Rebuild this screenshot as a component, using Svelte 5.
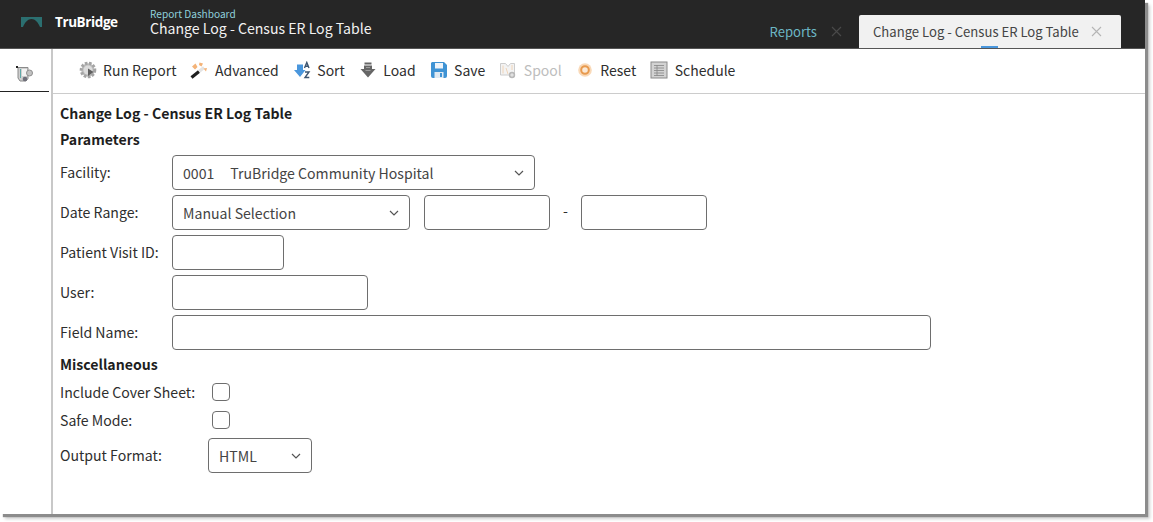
<script>
  const rows = [
    { label: 'Patient Visit ID:', cls: 'w-id' },
    { label: 'User:', cls: 'w-user' },
    { label: 'Field Name:', cls: 'w-field' }
  ];
</script>

{#snippet chev()}
  <svg class="chev" viewBox="0 0 10 6" width="10" height="6"><path d="M1 1l4 4 4-4" fill="none" stroke="#555" stroke-width="1.2"/></svg>
{/snippet}

<div class="page">
<div class="frame">
  <header class="top">
    <div class="brand">
      <svg class="logo" width="21" height="10" viewBox="0 0 21 10"><path d="M0 0H21V10H19C17 5 14 2 10.500 2S4 5 2 10H0Z" fill="#2b6f70"/></svg>
      <span class="brandname">TruBridge</span>
    </div>
    <div class="crumb">
      <div class="crumb-sub">Report Dashboard</div>
      <div class="crumb-title">Change Log - Census ER Log Table</div>
    </div>
    <div class="tabs">
      <div class="tab">
        <span>Reports</span>
        <svg width="11" height="11" viewBox="0 0 11 11"><path d="M1 1l9 9M10 1l-9 9" stroke="#4a4a4a" stroke-width="1.100"/></svg>
      </div>
      <div class="tab active">
        <span>Change Log - Census ER Log Table</span>
        <svg width="11" height="11" viewBox="0 0 11 11"><path d="M1 1l9 9M10 1l-9 9" stroke="#b5b5b5" stroke-width="1.100"/></svg>
        <i class="tab-mark"></i>
      </div>
    </div>
  </header>

  <div class="body">
    <aside class="side">
      <div class="side-item">
        <svg width="18" height="18" viewBox="0 0 18 18">
          <path d="M2 2.500h10v11l-2 2.500H4l-2-3Z" fill="#cfcfcf" stroke="#8a8a8a"/>
          <path d="M4.500 4v9" stroke="#5fa9a8"/>
          <rect x="6" y="4" width="5" height="7" fill="#f2f2f2"/>
          <circle cx="13.500" cy="8" r="3" fill="#c2c2c2" stroke="#8f8f8f"/>
          <circle cx="9" cy="14" r="2.300" fill="#6f6f7a"/>
          <rect x="0" y="1" width="2" height="2" fill="#222"/>
        </svg>
      </div>
    </aside>

    <main class="main">
      <nav class="toolbar">
        <button class="tool">
          <svg width="18" height="18" viewBox="0 0 18 18">
            <circle cx="9" cy="9" r="6.800" fill="#bdbdbd" stroke="#a4a4a4" stroke-width="3" stroke-dasharray="2.600 1.500"/>
            <circle cx="9" cy="9" r="4.500" fill="#dcdcdc"/>
            <path d="M9 7.500l5.500 3.500L9 15Z" fill="#5f5f5f"/>
          </svg>
          Run Report
        </button>
        <button class="tool">
          <svg width="18" height="18" viewBox="0 0 18 18">
            <path d="M1.500 16.500L9 10.500" stroke="#1e1e1e" stroke-width="3.200"/>
            <path d="M9 10.500l5-4" stroke="#e4e4e4" stroke-width="3.200"/>
            <path d="M2 5.500l3.500-3 2 3.500-2.500 2.500ZM9.500 1.500l3.500 1-1.500 3-2.500-1.500ZM13.500 7.500l3.500-.5-1 3.500Z" fill="#f4b378"/>
          </svg>
          Advanced
        </button>
        <button class="tool">
          <svg width="18" height="18" viewBox="0 0 18 18">
            <path d="M4 3.500h6v5.500h2.500L7 16 1 9h3Z" fill="#4a97dd"/>
            <path d="M11.500 7l2.300-5.500L16 7M12.500 5.300h2.600M12 11h4l-4 5.500h4.300" fill="none" stroke="#3d5570" stroke-width="1.400"/>
          </svg>
          Sort
        </button>
        <button class="tool">
          <svg width="18" height="18" viewBox="0 0 18 18">
            <path d="M5.500 1.500h7v2h-7ZM5 4.500h8v3.500h3.500L9 16.500 1.500 8H5Z" fill="#666"/>
            <path d="M7 6.500h4M6.500 9.500h5" stroke="#9c9c9c"/>
          </svg>
          Load
        </button>
        <button class="tool">
          <svg width="18" height="18" viewBox="0 0 18 18">
            <path d="M2 1h12l3 3v11a2 2 0 0 1-2 2H3a2 2 0 0 1-2-2V2Z" fill="#3f93d4"/>
            <rect x="5" y="2" width="8" height="5.500" fill="#eef4fa"/>
            <rect x="4.500" y="11" width="9" height="6" fill="#dfe9f2"/>
            <rect x="10" y="12" width="2" height="4" fill="#3f93d4"/>
          </svg>
          Save
        </button>
        <button class="tool off">
          <svg width="18" height="18" viewBox="0 0 18 18">
            <path d="M1.500 2.500h5l2.500 3 2.500-3h4v11.500h-14Z" fill="#f3f3f3" stroke="#cccccc"/>
            <path d="M4 4.500v8M7 7l2 6M13 4v5" stroke="#f0d4b8"/>
            <circle cx="13" cy="14" r="3.200" fill="#b8b8b8"/>
            <path d="M13 12.200v3.600M11.200 14h3.600" stroke="#eee"/>
          </svg>
          Spool
        </button>
        <button class="tool">
          <svg width="18" height="18" viewBox="0 0 18 18">
            <circle cx="9" cy="9" r="6.800" fill="#f9d9b8"/>
            <circle cx="9" cy="9" r="3.800" fill="#fbe9d6" stroke="#e89a4e" stroke-width="2"/>
          </svg>
          Reset
        </button>
        <button class="tool">
          <svg width="18" height="18" viewBox="0 0 18 18">
            <rect x="1" y="1" width="16" height="16" fill="#d2d2d2" stroke="#8a8a8a"/>
            <path d="M4 4.500h10M4 7h10M4 9.500h10M4 12h10M4 14.500h10M7 4v11" stroke="#8c8c8c" stroke-width="0.900"/>
          </svg>
          Schedule
        </button>
      </nav>

      <section class="form">
        <h1>Change Log - Census ER Log Table</h1>
        <h2>Parameters</h2>

        <div class="row">
          <span class="lbl">Facility:</span>
          <div class="ctl sel w-fac"><span class="pre">0001</span><span>TruBridge Community Hospital</span>{@render chev()}</div>
        </div>
        <div class="row">
          <span class="lbl">Date Range:</span>
          <div class="ctl sel w-range"><span>Manual Selection</span>{@render chev()}</div>
          <div class="ctl w-date"></div>
          <span class="dash">-</span>
          <div class="ctl w-date"></div>
        </div>
        {#each rows as r}
          <div class="row">
            <span class="lbl">{r.label}</span>
            <div class="ctl {r.cls}"></div>
          </div>
        {/each}

        <h2 class="misc">Miscellaneous</h2>
        <div class="crow first">
          <span class="lbl2">Include Cover Sheet:</span>
          <div class="check"></div>
        </div>
        <div class="crow">
          <span class="lbl2">Safe Mode:</span>
          <div class="check"></div>
        </div>
        <div class="orow">
          <span class="lbl3">Output Format:</span>
          <div class="ctl sel w-out"><span>HTML</span>{@render chev()}</div>
        </div>
      </section>
    </main>
  </div>
</div>
</div>

<style>
  :global(body) {
    margin: 0;
    background: #fff;
  }
  .page {
    height: 522px;
    overflow: hidden;
  }
  .frame {
    width: 1145px;
    height: 514px;
    display: flex;
    flex-direction: column;
    background: #fff;
    box-shadow: 3px 3px 1px #8c8c8c, 5px 5px 3px #cfcfcf;
    font-family: "Noto Sans CJK JP", "Noto Sans", sans-serif;
    font-size: 14.100px;
    color: #2e2e2e;
    overflow: hidden;
  }
  .top {
    height: 48px;
    flex: none;
    background: #262626;
    border-bottom: 1px solid #555;
    display: flex;
    color: #fff;
  }
  .brand {
    width: 150px;
    display: flex;
    align-items: center;
    padding: 0 0 4px 21px;
    box-sizing: border-box;
  }
  .brandname {
    margin-left: 13px;
    font-size: 13.500px;
    font-weight: 700;
    font-family: "Open Sans", sans-serif;
    letter-spacing: -0.4px;
  }
  .crumb { padding-top: 7px; }
  .crumb-sub { font-size: 10.100px; color: #8fd0dc; line-height: 13px; }
  .crumb-title { font-size: 14.100px; line-height: 16px; color: #f2f2f2; }
  .tabs {
    margin-left: auto;
    display: flex;
    align-items: flex-end;
    padding-right: 24px;
  }
  .tab {
    height: 33px;
    display: flex;
    align-items: center;
    gap: 14px;
    color: #6cb6c4;
    padding: 0 17px 0 0;
    font-size: 13.100px;
    position: relative;
    white-space: nowrap;
  }
  .tab.active {
    width: 262px;
    box-sizing: border-box;
    background: #f1f1f1;
    color: #444;
    border-radius: 2px 2px 0 0;
    padding: 0 16px 0 14px;
    gap: 12px;
    margin-left: 0;
  }
  .tab-mark {
    position: absolute;
    left: 122px;
    bottom: 0;
    width: 17px;
    height: 2px;
    background: #4a97dd;
  }
  .body { flex: 1; display: flex; min-height: 0; }
  .side {
    width: 53px;
    flex: none;
    box-sizing: border-box;
    border-right: 2px solid #c8c8c8;
  }
  .side-item {
    height: 43px;
    box-sizing: border-box;
    border-bottom: 1px solid #222;
    margin-right: 2px;
    display: flex;
    align-items: center;
    justify-content: center;
    padding-top: 8px;
  }
  .main { flex: 1; min-width: 0; }
  .toolbar {
    height: 45px;
    box-sizing: border-box;
    border-bottom: 1px solid #ccc;
    display: flex;
    align-items: center;
    padding: 0 0 2px 25.500px;
    gap: 14px;
  }
  .tool {
    display: flex;
    align-items: center;
    gap: 6.500px;
    border: 0;
    background: none;
    padding: 0;
    font: inherit;
    font-size: 14px;
    color: #2e2e2e;
    white-space: nowrap;
  }
  .tool.off { color: #bdbdbd; }
  .form { padding: 9px 0 0 7px; }
  h1, h2 {
    margin: 0;
    font-size: 14.100px;
    font-weight: 700;
    color: #1e1e1e;
    line-height: 20px;
  }
  h1 { margin-bottom: 6px; }
  h2 { margin-bottom: 6px; }
  .row {
    display: flex;
    align-items: center;
    height: 35px;
    margin-bottom: 5px;
  }
  .lbl { width: 112px; flex: none; padding-bottom: 2px; }
  .ctl {
    box-sizing: border-box;
    height: 35px;
    border: 1px solid #6e6e6e;
    border-radius: 4px;
    background: #fff;
  }
  .sel {
    display: flex;
    align-items: center;
    padding: 0 10px;
    color: #444;
    position: relative;
  }
  .chev { margin-left: auto; }
  .pre { margin-right: 16px; }
  .w-fac { width: 363px; }
  .w-range { width: 238px; margin-right: 14px; }
  .w-date { width: 126px; }
  .dash { width: 31px; text-align: center; padding-bottom: 6px; }
  .w-id { width: 112px; }
  .w-user { width: 196px; }
  .w-field { width: 759px; }
  .misc { margin-top: -1px; margin-bottom: 0; }
  .crow {
    display: flex;
    align-items: center;
    height: 18px;
    margin-top: 10px;
  }
  .crow.first { margin-top: 9px; }
  .lbl2 { width: 152px; flex: none; }
  .check {
    box-sizing: border-box;
    width: 18px;
    height: 18px;
    border: 1px solid #6e6e6e;
    border-radius: 4px;
  }
  .orow {
    display: flex;
    align-items: center;
    margin-top: 9px;
  }
  .lbl3 { width: 148px; flex: none; padding-bottom: 2px; }
  .w-out { width: 104px; }
</style>
